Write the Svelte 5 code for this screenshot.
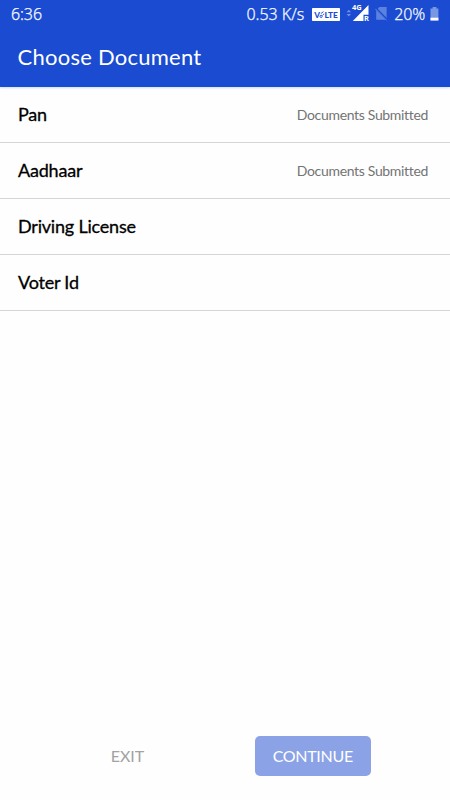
<script>
  const documents = [
    { name: 'Pan', status: 'Documents Submitted' },
    { name: 'Aadhaar', status: 'Documents Submitted' },
    { name: 'Driving License', status: '' },
    { name: 'Voter Id', status: '' }
  ];
</script>

<div class="screen">
  <header>
    <div class="statusbar">
      <span class="time">6:36</span>
      <div class="indicators">
        <span class="speed">0.53 K/s</span>
        <svg class="volte" width="28" height="13" viewBox="0 0 28 13">
          <rect width="28" height="13" rx="0.7" fill="#fff" />
          <text x="2.2" y="9.6" class="badge">V</text>
          <path d="M8 8.4a1.1 1.1 0 1 0 2.2 0a1.1 1.1 0 1 0-2.2 0M8.9 5.6l2.6-2M10.4 7.4l1.7-1.6" fill="none" stroke="#1a4bd0" stroke-width="0.9" />
          <text x="12.4" y="9.6" class="badge" textLength="13.4" lengthAdjust="spacingAndGlyphs">LTE</text>
        </svg>
        <svg class="signal" width="24" height="24" viewBox="0 0 24 24">
          <path d="M0.5 12.3L2.8 9.8L5.1 12.3ZM0.5 14L2.8 16.5L5.1 14Z" fill="#6f8fe3" />
          <path d="M22.5 5V14.8H17.5V21H6.8Z" fill="#fff" />
          <text x="6" y="10.4" class="network">4G</text>
          <text x="18" y="21" class="roaming">R</text>
        </svg>
        <svg class="nosim" width="13" height="15" viewBox="0 0 13 15">
          <path d="M4.3 1H11.6V13.7H1.2V4.4Z" fill="#5c82e1" />
          <path d="M0 1.4L12.3 14" stroke="#1a4bd0" stroke-width="2" />
          <path d="M0.2 2.7L11.7 14.4" stroke="#5c82e1" stroke-width="1" />
        </svg>
        <span class="percent">20%</span>
        <svg class="battery" width="9" height="14" viewBox="0 0 9 14">
          <path d="M2.6 0H6.4V1.5H8.4V13.5H0.5V1.5H2.6Z" fill="#7898e6" />
          <path d="M0.5 10.7H8.4V13.5H0.5Z" fill="#fff" />
        </svg>
      </div>
    </div>
    <h1>Choose Document</h1>
  </header>

  <main>
    {#each documents as doc}
      <div class="row">
        <span class="name">{doc.name}</span>
        {#if doc.status}<span class="status">{doc.status}</span>{/if}
      </div>
    {/each}
  </main>

  <footer>
    <button class="exit">EXIT</button>
    <button class="continue">CONTINUE</button>
  </footer>
</div>

<style>
  :global(body) { margin: 0; background: #fff; }
  .screen {
    width: 450px;
    height: 800px;
    display: flex;
    flex-direction: column;
    background: #fefefe;
    font-family: Lato, "Liberation Sans", sans-serif;
    font-variant-ligatures: none;
    overflow: hidden;
  }
  header {
    height: 87px;
    flex: none;
    background: #1a4bd0;
    color: #fff;
    box-shadow: 0 1px 2px #cbdafa;
    z-index: 1;
  }
  .statusbar {
    height: 28px;
    padding: 0 11px 0 11px;
    display: flex;
    align-items: center;
    justify-content: space-between;
    color: #f4f8ff;
  }
  .time, .speed, .percent {
    font: 300 16px/28px "Noto Sans", sans-serif;
    white-space: nowrap;
    -webkit-text-stroke: 0.25px #f4f8ff;
  }
  .time { letter-spacing: -0.1px; }
  .indicators { display: flex; align-items: center; height: 28px; }
  .volte { margin-left: 8px; }
  .badge { font: 900 8.2px Lato, sans-serif; fill: #1a4bd0; }
  .signal { margin: -4px 0 0 6px; overflow: visible; }
  .network, .roaming { font: 700 7.5px "Noto Sans", sans-serif; fill: #fff; }
  .nosim { margin: -2px 0 0 5px; }
  .percent { margin-left: 6px; letter-spacing: -0.2px; }
  .battery { margin: -1px 0 0 5px; }
  h1 {
    margin: 0;
    padding-left: 17.5px;
    font-size: 22px;
    font-weight: 400;
    line-height: 57px;
    letter-spacing: 0.25px;
  }
  main { flex: 1; }
  .row {
    box-sizing: border-box;
    height: 56px;
    padding: 0 22px 2px 18px;
    border-bottom: 1px solid #d6d6d6;
    display: flex;
    align-items: center;
    justify-content: space-between;
  }
  .name {
    font-size: 18px;
    letter-spacing: -0.2px;
    color: #000;
    -webkit-text-stroke: 0.3px #000;
  }
  .status {
    padding-top: 2px;
    font-size: 14px;
    letter-spacing: -0.33px;
    color: #747474;
  }
  footer {
    height: 40px;
    padding: 0 79.5px 24px 97px;
    display: flex;
    justify-content: space-between;
  }
  button {
    border: 0;
    padding: 0;
    height: 40px;
    font: 400 16px/40px Lato, sans-serif;
    letter-spacing: -0.3px;
  }
  .exit { width: 61px; background: none; color: #a2a2a2; letter-spacing: 0; }
  .continue { width: 115.5px; border-radius: 5px; background: #8ba3e6; color: #fff; }
</style>
